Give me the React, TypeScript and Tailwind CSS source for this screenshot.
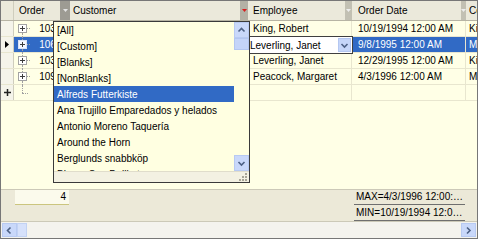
import React from 'react';

const font = "font-['Liberation_Sans',Arial,sans-serif]";

interface OrderRow {
  order: string;
  employee: string;
  date: string;
  extra: string;
  selected?: boolean;
}

const rows: OrderRow[] = [
  { order: '10303', employee: 'King, Robert', date: '10/19/1994 12:00 AM', extra: 'Kirchgasse 6' },
  { order: '10605', employee: 'Leverling, Janet', date: '9/8/1995 12:00 AM', extra: 'Mataderos 2312', selected: true },
  { order: '10373', employee: 'Leverling, Janet', date: '12/29/1995 12:00 AM', extra: 'Kirchgasse 6' },
  { order: '10948', employee: 'Peacock, Margaret', date: '4/3/1996 12:00 AM', extra: 'Mehrheimerstr. 369' },
];

const filterItems = [
  '[All]',
  '[Custom]',
  '[Blanks]',
  '[NonBlanks]',
  'Alfreds Futterkiste',
  'Ana Trujillo Emparedados y helados',
  'Antonio Moreno Taquería',
  'Around the Horn',
  'Berglunds snabbköp',
  'Blauer See Delikatessen',
];

const Arrow = ({ color }: { color: string }) => (
  <svg width="5" height="3" viewBox="0 0 5 3">
    <path d="M0 0h5L2.5 3z" fill={color} />
  </svg>
);

const Chevron = ({ dir }: { dir: 'up' | 'down' | 'left' | 'right' }) => {
  const d = {
    up: 'M1.5 5.5L4.5 2.5L7.5 5.5',
    down: 'M1.5 3L4.5 6L7.5 3',
    left: 'M5.5 1.5L2.5 4.5L5.5 7.5',
    right: 'M3 1.5L6 4.5L3 7.5',
  }[dir];
  return (
    <svg width="9" height="9" viewBox="0 0 9 9">
      <path d={d} fill="none" stroke="#4D6185" strokeWidth="1.6" />
    </svg>
  );
};

interface HeaderCellProps {
  label: string;
  width: string;
  btn: string;
  arrow: string;
  pad: string;
}

const HeaderCell: React.FC<HeaderCellProps> = ({ label, width, btn, arrow, pad }) => (
  <div className={`${width} h-full flex items-center`}>
    <span className={`${pad} flex-1 whitespace-nowrap overflow-hidden`}>{label}</span>
    <div className={`${btn} h-full flex justify-center pt-[8px] shrink-0`}>
      <Arrow color={arrow} />
    </div>
  </div>
);

const ExpandBox = ({ selected }: { selected?: boolean }) => (
  <span
    className={`absolute left-[4px] top-[3px] w-[9px] h-[9px] border flex items-center justify-center ${
      selected ? 'border-[#D8E2F6] bg-[#F4F7FF]' : 'border-[#A3A3A3] bg-white'
    }`}
  >
    <svg width="5" height="5" viewBox="0 0 5 5">
      <path d="M0 2.5h5M2.5 0v5" stroke="#3C3C3C" strokeWidth="1" />
    </svg>
  </span>
);

const GridRow: React.FC<{ row: OrderRow; first: boolean }> = ({ row, first }) => {
  const sel = row.selected;
  return (
    <div className="flex h-[16px] border-b border-[#E8E6CF]">
      <div className="w-[13px] shrink-0 bg-[#F5F4EA] border-r border-[#CFCDBD] flex items-center justify-center">
        {sel && (
          <svg width="4" height="7" viewBox="0 0 4 7">
            <path d="M0 0L4 3.5L0 7z" fill="#000" />
          </svg>
        )}
      </div>
      <div
        className={`w-[56px] shrink-0 relative border-r border-[#E8E6CF] flex items-center justify-end pr-[2px] ${
          sel ? 'bg-[#316AC5] text-white' : ''
        }`}
      >
        {!first && <span className="absolute left-[8px] top-0 h-[3px] border-l border-dotted border-[#A0A0A0]" />}
        <span className="absolute left-[8px] top-[12px] h-[4px] border-l border-dotted border-[#A0A0A0]" />
        <span className="absolute left-[13px] top-[7px] w-[3px] border-t border-dotted border-[#A0A0A0]" />
        <ExpandBox selected={sel} />
        {row.order}
      </div>
      <div className="w-[178px] shrink-0 border-r border-[#E8E6CF]" />
      <div className="w-[104px] shrink-0 relative border-r border-[#E8E6CF] flex items-center pl-[5px]">
        {sel ? (
          <div className="absolute -top-[1px] left-0 w-[105px] h-[18px] border border-[#3F3F3F] bg-white flex items-center z-[5]">
            <span className="pl-[1px] flex-1">{row.employee}</span>
            <div className="w-[13px] h-[14px] mr-[1px] bg-[#C6D6F9] border border-[#B4C7F1] flex items-center justify-center">
              <Chevron dir="down" />
            </div>
          </div>
        ) : (
          row.employee
        )}
      </div>
      <div
        className={`w-[114px] shrink-0 border-r border-[#E8E6CF] flex items-center pl-[6px] whitespace-nowrap ${
          sel ? 'bg-[#316AC5] text-white' : ''
        }`}
      >
        {row.date}
      </div>
      <div
        className={`flex-1 flex items-center pl-[3px] whitespace-nowrap overflow-hidden ${
          sel ? 'bg-[#316AC5] text-white' : ''
        }`}
      >
        {row.extra}
      </div>
    </div>
  );
};

const FilterDropdown = () => (
  <div className="absolute left-[52px] top-0 w-[197px] h-[162px] border border-[#3A3A3A] bg-[#FFFFE1] flex flex-col z-10">
    <div className="flex h-[149px] overflow-hidden">
      <div className="flex-1 flex flex-col overflow-hidden">
        {filterItems.map((item, i) => (
          <div
            key={item}
            className={`h-[16px] shrink-0 flex items-center pl-[3px] whitespace-nowrap ${
              i === 4 ? 'bg-[#316AC5] text-white' : ''
            }`}
          >
            {item}
          </div>
        ))}
      </div>
      <div className="w-[15px] shrink-0 flex flex-col">
        <div className="h-[16px] bg-[#C9D8FA] border border-[#B8CAF2] flex items-center justify-center">
          <Chevron dir="up" />
        </div>
        <div className="h-[12px] bg-[#C4D4F9] border border-[#B3C6F0]" />
        <div className="flex-1" />
        <div className="h-[16px] bg-[#C9D8FA] border border-[#B8CAF2] flex items-center justify-center">
          <Chevron dir="down" />
        </div>
      </div>
    </div>
    <div className="flex-1 bg-[#F3F1E2] border-t border-[#E0DDCB] flex justify-end items-end pr-[2px] pb-[1px]">
      <svg width="8" height="8" viewBox="0 0 8 8">
        <g fill="#A8A597">
          <rect x="6" y="0" width="2" height="2" />
          <rect x="3" y="3" width="2" height="2" />
          <rect x="6" y="3" width="2" height="2" />
          <rect x="0" y="6" width="2" height="2" />
          <rect x="3" y="6" width="2" height="2" />
          <rect x="6" y="6" width="2" height="2" />
        </g>
      </svg>
    </div>
  </div>
);

export default function App() {
  return (
    <div
      className={`${font} text-[10px] text-black w-[478px] h-[239px] border border-[#777] flex flex-col bg-[#FFFFE6] overflow-hidden`}
    >
      {/* Column headers */}
      <div className="flex h-[20px] shrink-0 bg-[#EBE9DB] border-b border-[#B7B4A4]">
        <div className="w-[13px] shrink-0 border-r border-[#CFCDBD]" />
        <HeaderCell label="Order" width="w-[56px]" pad="pl-[5px]" btn="w-[10px] bg-[#9D9B93]" arrow="#E4E4E4" />
        <HeaderCell label="Customer" width="w-[178px]" pad="pl-[3px]" btn="w-[8px] bg-[#B3B1A5]" arrow="#D81E1E" />
        <HeaderCell label="Employee" width="w-[104px]" pad="pl-[5px]" btn="w-[7px] bg-[#C2C0B3]" arrow="#EDEDED" />
        <HeaderCell label="Order Date" width="w-[114px]" pad="pl-[6px]" btn="w-[5px] bg-[#C2C0B3]" arrow="#EDEDED" />
        <div className="flex-1 flex items-center pl-[3px] whitespace-nowrap overflow-hidden">Company</div>
      </div>

      {/* Rows */}
      <div className="flex-1 relative">
        {rows.map((row, i) => (
          <GridRow key={row.order} row={row} first={i === 0} />
        ))}
        <div className="flex h-[16px] border-b border-[#E8E6CF]">
          <div className="w-[13px] shrink-0 bg-[#F5F4EA] border-r border-[#CFCDBD] flex items-center justify-center">
            <svg width="7" height="7" viewBox="0 0 7 7">
              <path d="M0 3.5h7M3.5 0v7" stroke="#222" strokeWidth="1.5" />
            </svg>
          </div>
          <div className="w-[56px] shrink-0 relative border-r border-[#E8E6CF]">
            <span className="absolute left-[8px] top-0 h-[8px] border-l border-dotted border-[#A0A0A0]" />
            <span className="absolute left-[8px] top-[8px] w-[6px] border-t border-dotted border-[#A0A0A0]" />
          </div>
          <div className="w-[178px] shrink-0 border-r border-[#E8E6CF]" />
          <div className="w-[104px] shrink-0 border-r border-[#E8E6CF]" />
          <div className="w-[114px] shrink-0 border-r border-[#E8E6CF]" />
          <div className="flex-1" />
        </div>
        <FilterDropdown />
      </div>

      {/* Summary footer */}
      <div className="h-[32px] shrink-0 bg-[#ECE9D8] border-t border-[#CCC9B8] flex">
        <div className="w-[13px] shrink-0" />
        <div className="w-[56px] shrink-0 pl-[1px]">
          <div className="w-[54px] h-[15px] bg-[#FBFAEC] border-b border-[#CBC57E] text-right pr-[3px] leading-[14px]">4</div>
        </div>
        <div className="w-[282px] shrink-0" />
        <div className="flex flex-col gap-[1px] pl-[2px]">
          <div className="w-[111px] h-[15px] border-b border-[#6F6F6F] pl-[2px] leading-[14px] truncate">
            MAX=4/3/1996 12:00:00 AM
          </div>
          <div className="w-[111px] h-[15px] border-b border-[#6F6F6F] pl-[2px] leading-[14px] truncate">
            MIN=10/19/1994 12:00:00 AM
          </div>
        </div>
      </div>

      {/* Horizontal scrollbar */}
      <div className="h-[17px] shrink-0 bg-[#F4F3EE] border-t border-[#CCC9B8] flex items-center px-[1px]">
        <div className="w-[15px] h-[14px] bg-[#C9D8FA] border border-[#B8CAF2] flex items-center justify-center">
          <Chevron dir="left" />
        </div>
        <div className="w-[10px] h-[14px] bg-[#D6E1FB] border border-[#C2D2F3]" />
        <div className="flex-1" />
        <div className="w-[15px] h-[14px] bg-[#C9D8FA] border border-[#B8CAF2] flex items-center justify-center">
          <Chevron dir="right" />
        </div>
      </div>
    </div>
  );
}
